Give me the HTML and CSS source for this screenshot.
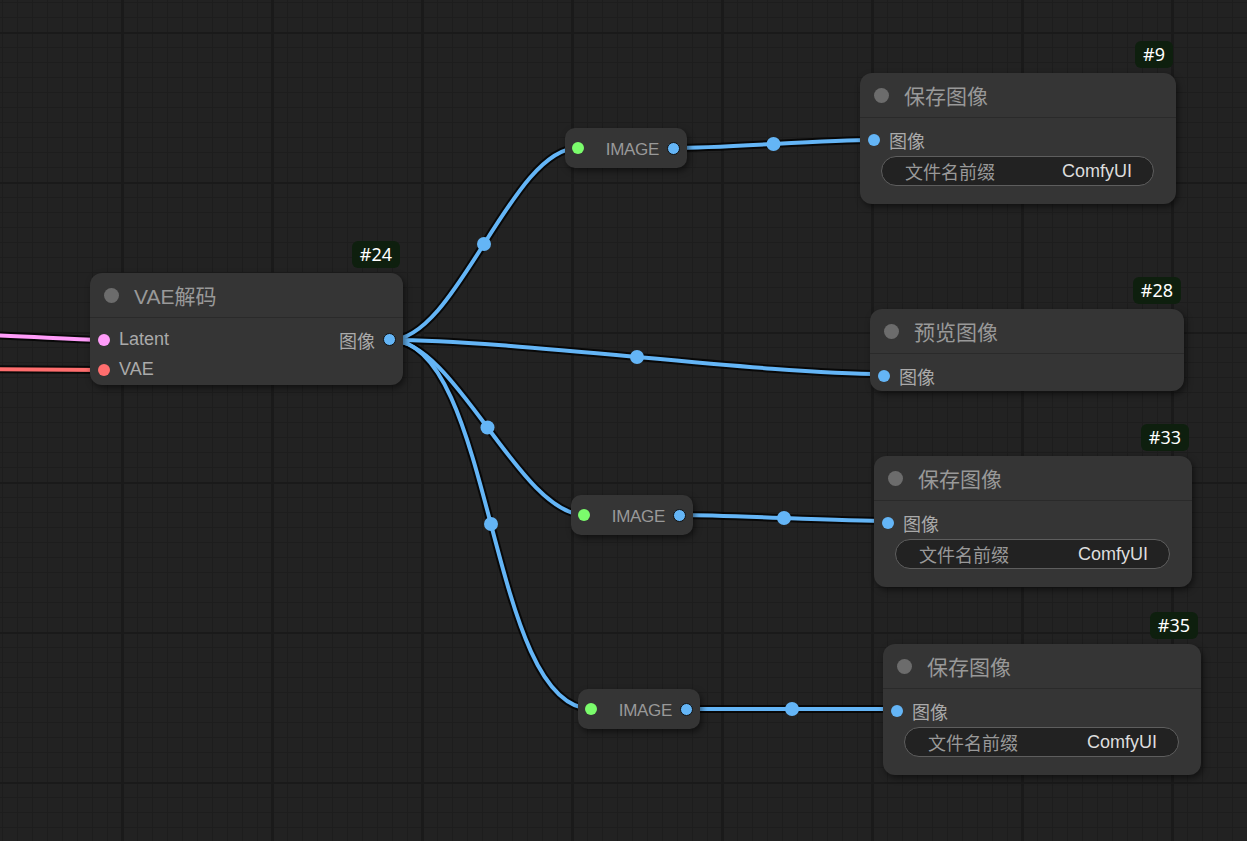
FILE: index.html
```html
<!DOCTYPE html>
<html lang="zh">
<head>
    <meta charset="UTF-8">
    <meta name="viewport" content="width=device-width, initial-scale=1.0">
    <title>工作流</title>
    <link rel="stylesheet" href="styles.css">
</head>
<body>
    <div class="graph">
        <!-- links are drawn under the nodes, ends sit on slot centres -->
        <svg class="links" width="1247" height="841" viewBox="0 0 1247 841">
            <g class="link-shadow">
                <path d="M-20 335 C 30 336, 60 339, 104 340"/>
                <path d="M-20 369 L 104 370"/>
                <path d="M390 340 C 457 340, 511 148, 578 148"/>
                <path d="M390 340 C 514 340, 760 374, 884 374"/>
                <path d="M390 340 C 455.5 340, 519.5 515, 585 515"/>
                <path d="M390 340 C 495 340, 487 709, 592 709"/>
                <path d="M674 148 C 724 148, 823 140, 873 140"/>
                <path d="M680 515 C 732 515, 836 521, 888 521"/>
                <path d="M687 709 C 739.5 709, 844.5 709, 897 709"/>
            </g>
            <path class="link link-latent" d="M-20 335 C 30 336, 60 339, 104 340"/>
            <path class="link link-vae" d="M-20 369 L 104 370"/>
            <g class="link link-image">
                <path d="M390 340 C 457 340, 511 148, 578 148"/>
                <path d="M390 340 C 514 340, 760 374, 884 374"/>
                <path d="M390 340 C 455.5 340, 519.5 515, 585 515"/>
                <path d="M390 340 C 495 340, 487 709, 592 709"/>
                <path d="M674 148 C 724 148, 823 140, 873 140"/>
                <path d="M680 515 C 732 515, 836 521, 888 521"/>
                <path d="M687 709 C 739.5 709, 844.5 709, 897 709"/>
            </g>
            <g class="link-mid">
                <circle cx="484" cy="244" r="7"/>
                <circle cx="637" cy="357" r="7"/>
                <circle cx="487.5" cy="427.5" r="7"/>
                <circle cx="491" cy="524" r="7"/>
                <circle cx="773.5" cy="144" r="7"/>
                <circle cx="784" cy="518" r="7"/>
                <circle cx="792" cy="709" r="7"/>
            </g>
        </svg>

        <!-- VAE decode -->
        <div class="node node-vae">
            <div class="badge">#24</div>
            <div class="node-title"><span class="title-dot"></span>VAE解码</div>
            <div class="node-body">
                <div class="slots">
                    <div class="slot slot-in"><span class="dot dot-latent"></span>Latent</div>
                    <div class="slot slot-out">图像<span class="dot dot-out"></span></div>
                    <div class="slot slot-in"><span class="dot dot-vae"></span>VAE</div>
                </div>
            </div>
        </div>

        <!-- reroutes -->
        <div class="reroute reroute-a"><span class="dot dot-reroute"></span><span class="reroute-label">IMAGE</span><span class="dot dot-out"></span></div>
        <div class="reroute reroute-b"><span class="dot dot-reroute"></span><span class="reroute-label">IMAGE</span><span class="dot dot-out"></span></div>
        <div class="reroute reroute-c"><span class="dot dot-reroute"></span><span class="reroute-label">IMAGE</span><span class="dot dot-out"></span></div>

        <!-- save / preview -->
        <div class="node node-save-9">
            <div class="badge">#9</div>
            <div class="node-title"><span class="title-dot"></span>保存图像</div>
            <div class="node-body">
                <div class="slot slot-in"><span class="dot dot-image"></span>图像</div>
                <div class="widget"><span class="widget-label">文件名前缀</span><span class="widget-value">ComfyUI</span></div>
            </div>
        </div>

        <div class="node node-preview">
            <div class="badge">#28</div>
            <div class="node-title"><span class="title-dot"></span>预览图像</div>
            <div class="node-body">
                <div class="slot slot-in"><span class="dot dot-image"></span>图像</div>
            </div>
        </div>

        <div class="node node-save-33">
            <div class="badge">#33</div>
            <div class="node-title"><span class="title-dot"></span>保存图像</div>
            <div class="node-body">
                <div class="slot slot-in"><span class="dot dot-image"></span>图像</div>
                <div class="widget"><span class="widget-label">文件名前缀</span><span class="widget-value">ComfyUI</span></div>
            </div>
        </div>

        <div class="node node-save-35">
            <div class="badge">#35</div>
            <div class="node-title"><span class="title-dot"></span>保存图像</div>
            <div class="node-body">
                <div class="slot slot-in"><span class="dot dot-image"></span>图像</div>
                <div class="widget"><span class="widget-label">文件名前缀</span><span class="widget-value">ComfyUI</span></div>
            </div>
        </div>
    </div>
</body>
</html>
```

FILE: styles.css
```css
* {
    margin: 0;
    padding: 0;
    box-sizing: border-box;
}

html, body {
    width: 100%;
    height: 100%;
    overflow: hidden;
    background: #222;
}

.graph {
    position: relative;
    width: 1247px;
    height: 841px;
    overflow: hidden;
    font-family: "Liberation Sans", "Noto Sans CJK SC", sans-serif;
    background-color: #222;
    background-image:
        linear-gradient(90deg, #1a1a1a 3px, transparent 3px),
        linear-gradient(#1a1a1a 2px, transparent 2px),
        linear-gradient(90deg, #1d1d1d 1px, transparent 1px),
        linear-gradient(#1d1d1d 1px, transparent 1px);
    background-size: 150px 150px, 150px 150px, 15px 15px, 15px 15px;
    background-position: 121px 0, 0 32px, 2px 0, 0 2px;
}

/* links */
.links {
    position: absolute;
    top: 0;
    left: 0;
}

.links path {
    fill: none;
}

.link-shadow {
    stroke: #000;
    stroke-width: 8;
    stroke-opacity: 0.75;
    fill: none;
}

.link {
    stroke-width: 4;
    fill: none;
}

.link-latent { stroke: #ff9cf9; }
.link-vae { stroke: #ff6e6e; }
.link-image { stroke: #64b5f6; }

.link-mid circle {
    fill: #64b5f6;
}

/* nodes */
.node {
    position: absolute;
    background: #353535;
    border-radius: 12px;
    box-shadow: 2px 3px 6px rgba(0, 0, 0, 0.5);
}

.node-vae { left: 90px; top: 273px; width: 313px; }
.node-save-9 { left: 860px; top: 73px; width: 316px; }
.node-preview { left: 870px; top: 309px; width: 314px; }
.node-save-33 { left: 874px; top: 456px; width: 318px; }
.node-save-35 { left: 883px; top: 644px; width: 318px; }

.badge {
    position: absolute;
    top: -32px;
    right: 3px;
    height: 27px;
    padding: 0 8px;
    border-radius: 6px;
    background: #0e1f0e;
    color: #fff;
    font-family: "Noto Sans", "DejaVu Sans", sans-serif;
    font-size: 18px;
    line-height: 27px;
}

.node-title {
    display: flex;
    align-items: center;
    height: 45px;
    padding-left: 14px;
    border-bottom: 1px solid #2a2a2a;
    color: #999;
    font-size: 21px;
}

.title-dot {
    width: 15px;
    height: 15px;
    margin-right: 15px;
    border-radius: 50%;
    background: #6c6c6c;
}

.node-body {
    padding: 6px 0 1px;
}

.slots {
    display: grid;
    grid-template-columns: 1fr auto;
}

.slot {
    display: flex;
    align-items: center;
    height: 30px;
    padding-top: 1px;
    color: #aaa;
    font-size: 18px;
}

.slot-in {
    padding-left: 8px;
}

.slot-in .dot {
    margin-right: 9px;
}

.slot-out {
    justify-content: flex-end;
    padding-right: 7px;
}

.slot-out .dot {
    margin-left: 8px;
}

.dot {
    display: inline-block;
    flex: none;
    width: 12px;
    height: 12px;
    border-radius: 50%;
}

.dot-latent { background: #ff9cf9; }
.dot-vae { background: #ff6e6e; }
.dot-image { background: #64b5f6; }
.dot-reroute { background: #7bfc6c; }

.dot-out {
    width: 13px;
    height: 13px;
    background: #64b5f6;
    border: 1.5px solid #111;
}

.widget {
    display: flex;
    align-items: center;
    justify-content: space-between;
    height: 30px;
    margin: 2px 22px 17px 21px;
    padding: 0 21px 0 23px;
    border: 1px solid #5e5e5e;
    border-radius: 15px;
    background: #222;
    font-size: 18px;
}

.widget-label { color: #999; }
.widget-value { color: #ddd; }

/* reroutes */
.reroute {
    position: absolute;
    display: flex;
    align-items: center;
    width: 122px;
    height: 40px;
    padding: 0 7px;
    border-radius: 10px;
    background: #353535;
    box-shadow: 2px 3px 6px rgba(0, 0, 0, 0.5);
}

.reroute-a { left: 565px; top: 128px; }
.reroute-b { left: 571px; top: 495px; }
.reroute-c { left: 578px; top: 689px; }

.reroute-label {
    flex: 1;
    padding-top: 3px;
    padding-right: 8px;
    text-align: right;
    color: #999;
    font-size: 17px;
    letter-spacing: -0.3px;
}
```
